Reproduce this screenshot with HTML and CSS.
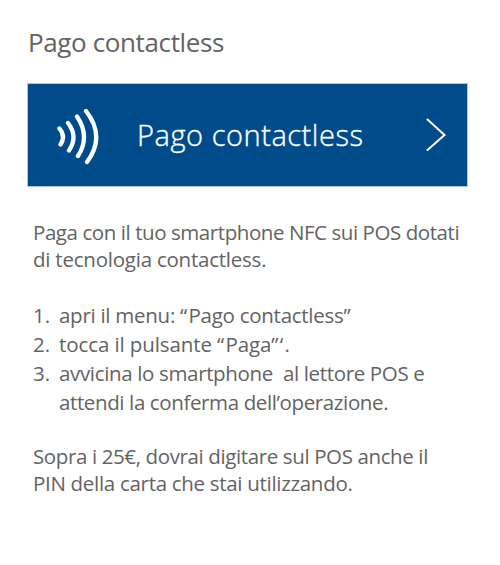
FILE: index.html
```
<!DOCTYPE html>
<html lang="it">
<head>
<meta charset="utf-8">
<title>Pago contactless</title>
<link rel="stylesheet" href="styles.css">
</head>
<body>
<main class="page">
<h1 class="title">Pago contactless</h1>
<a class="banner">
<svg class="waves" viewBox="0 0 44 56" width="44" height="56"><path d="M3.500 19.500Q10 27.500 4.500 35.500M12 14Q22.500 27.500 13 41.500M21 7.500Q34.500 27.500 22 47M30 2Q50 27.500 31 53"/></svg>
<span class="banner-label">Pago contactless</span>
<svg class="arrow" viewBox="0 0 20 34" width="20" height="34"><path d="M1.500 1.500L18.500 17L1.500 32"/></svg>
</a>
<p class="text intro"><span class="l1">Paga con il tuo smartphone NFC sui POS dotati</span><br><span class="l2">di tecnologia contactless.</span></p>
<ol class="text steps">
<li><span class="num">1.</span><span class="l3">apri il menu: <span class="quote">“</span>Pago contactless”</span></li>
<li><span class="num">2.</span><span class="l4">tocca il pulsante <span class="quote">“</span>Paga<span class="quote">”‘</span>.</span></li>
<li><span class="num">3.</span><span><span class="l5">avvicina lo smartphone&nbsp; al lettore POS e</span><br><span class="l6">attendi la conferma dell’operazione.</span></span></li>
</ol>
<p class="text note"><span class="l7">Sopra i 25€, dovrai digitare sul POS anche il</span><br><span class="l8">PIN della carta che stai utilizzando.</span></p>
</main>
</body>
</html>
```
FILE: styles.css
```
* { box-sizing: border-box; margin: 0; padding: 0; }
body { background: #fff; color: #636363; font-family: "Open Sans", sans-serif; }
.page { padding: 23px 32px 0 27px; }
.title { margin-left: 1px; font-size: 26px; line-height: 38px; font-weight: 400; letter-spacing: -.38px; white-space: nowrap; }
.banner { display: flex; align-items: center; width: 441px; height: 104px; margin-top: 22px; padding: 0 21px 0 29px; border: 1px solid #b9c3cd; background: #004c8a; color: #fff; }
.banner svg { fill: none; stroke: #fff; stroke-linecap: round; }
.waves { margin: 3px 0 0 -1px; stroke-width: 4.3; }
.banner-label { margin: -1px 0 0 37px; font-size: 29px; font-weight: 300; letter-spacing: .54px; white-space: nowrap; -webkit-text-stroke: .35px #fff; }
.arrow { margin-left: auto; stroke-width: 2; }
.text { margin-left: 6px; font-size: 20.5px; line-height: 27px; white-space: nowrap; }
.intro { margin-top: 32px; }
.steps { list-style: none; margin-top: 28px; line-height: 29px; }
.steps li { display: flex; }
.num { width: 26px; }
.note { margin-top: 26px; }
.quote { letter-spacing: 1.3px; }
.l1 { letter-spacing: -.43px; }
.l2 { letter-spacing: -.23px; }
.l3 { letter-spacing: -.27px; }
.l4 { letter-spacing: -.1px; }
.l5 { letter-spacing: -.345px; }
.l6 { letter-spacing: -.38px; }
.l7 { letter-spacing: -.38px; }
.l8 { letter-spacing: -.3px; }
```
